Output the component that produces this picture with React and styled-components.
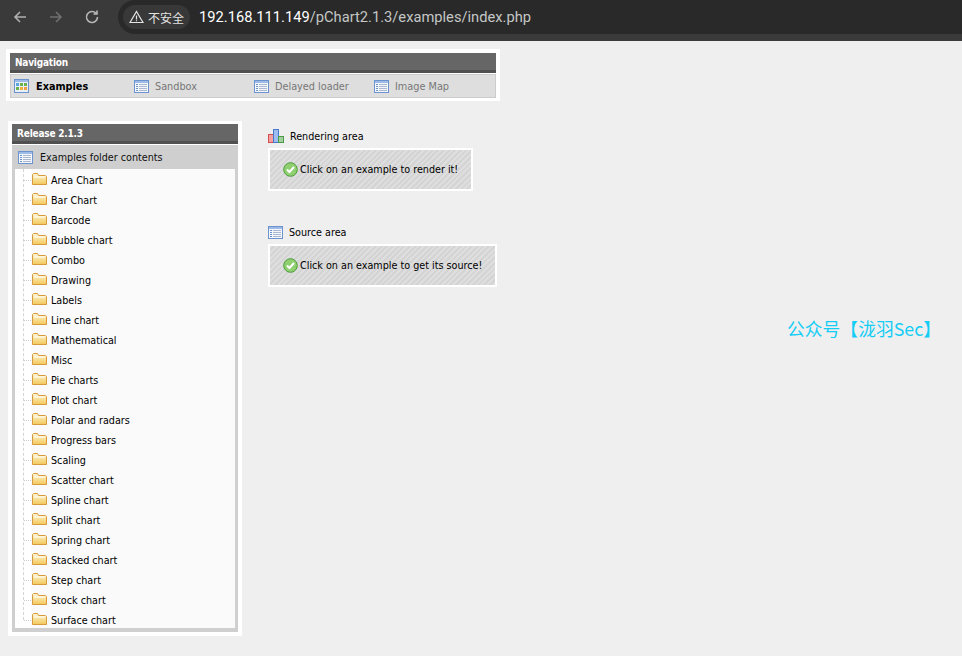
import React from "react";
import styled, { createGlobalStyle } from "styled-components";

const Global = createGlobalStyle`
  html, body { margin: 0; padding: 0; background: #efefef; }
  body { font-family: "DejaVu Sans", Verdana, sans-serif; font-stretch: condensed; overflow: hidden; }
`;
const Page = styled.div`width: 962px; height: 656px; display: flex; flex-direction: column; position: relative; overflow: hidden;`;
const Chrome = styled.div`height: 41px; background: #3a3a3a; display: flex; align-items: flex-start; box-sizing: border-box; flex: none;`;
const NavIcon = styled.div`width: 36px; height: 34px; display: flex; align-items: center; justify-content: center; flex: none;`;
const Omni = styled.div`margin-left: 8px; height: 34px; flex: 1; background: #292929; border-radius: 17px 0 0 17px; display: flex; align-items: center; padding-left: 5px; box-sizing: border-box;`;
const Chip = styled.div`height: 24px; width: 67px; background: #383838; border-radius: 12px; display: flex; align-items: center; justify-content: center; gap: 4px; color: #e3e3e3; font: 12px "Noto Sans CJK SC", sans-serif;`;
const Url = styled.div`margin-left: 9px; font: 14.7px "Roboto", sans-serif; color: #c4c7c5; b { font-weight: 400; color: #fff; }`;
const Body = styled.div`flex: 1; padding: 8px 0 0 6px; display: flex; flex-direction: column;`;
const NavBox = styled.div`width: 494px; box-sizing: border-box; height: 52px; background: #fff; padding: 4px;`;
const Head = styled.div`height: 20px; box-sizing: border-box; background: #666; border-bottom: 3px solid #505050; color: #fff; font-weight: 700; font-size: 10px; letter-spacing: -.2px; line-height: 19px; padding-left: 5px;`;
const Tabs = styled.div`margin-top: 1px; height: 24px; box-sizing: border-box; background: #dedede; border: 1px solid #ccc; display: flex; align-items: center; padding-left: 3px;`;
const Tab = styled.div`width: 120px; flex: none; display: flex; align-items: center; gap: ${p => p.$on ? 7 : 6}px; font-size: 10.8px; font-weight: ${p => p.$on ? 700 : 400}; color: ${p => p.$on ? "#000" : "#777"};`;
const Columns = styled.div`display: flex; margin-top: 20px; align-items: flex-start;`;
const Side = styled.div`margin-left: 2px; width: 234px; height: 515px; box-sizing: border-box; background: #fff; padding: 3px 4px 4px; flex: none;`;
const SideInner = styled.div`height: 508px; background: #cfcfcf; display: flex; flex-direction: column; box-sizing: border-box; padding-bottom: 4px; overflow: hidden;`;
const FolderHead = styled.div`border-top: 1px solid #fff; height: 25px; box-sizing: border-box; flex: none; display: flex; align-items: center; gap: 7px; padding-left: 6px; font-size: 10.7px; color: #111;`;
const Tree = styled.div`margin: 0 3px; flex: 1; background: linear-gradient(90deg, #fff 0 16px, #fafafa 16px); position: relative; padding: 1px 0 0 16px; overflow: hidden;`;
const Row = styled.div`height: 20px; display: flex; align-items: center; gap: 4px; padding-left: 1px; font-size: 10.7px; color: #000; position: relative;
  &::before { content: ""; position: absolute; left: -7px; top: 10px; width: 7px; border-top: 1px dotted #ccc; }`;
const Dots = styled.div`position: absolute; left: 8px; top: 0; height: 451px; border-left: 1px dashed #d4d4d4;`;
const Main = styled.div`margin-left: 26px; margin-top: 4px; width: 400px;`;
const Section = styled.div`margin-bottom: 30px;`;
const Title = styled.div`height: 22px; display: flex; align-items: center; gap: 6px; font-size: 10.7px; color: #000; margin-bottom: 1px;`;
const Message = styled.div`width: ${p => p.$w}px; height: 43px; box-sizing: border-box; border: 2px solid #fff; display: flex; align-items: center; gap: 2px; padding-left: 13px; font-size: 10.7px; color: #000;
  background: repeating-linear-gradient(135deg, #dedede 0 2px, #d4d4d4 2px 4px);`;
const Mark = styled.div`position: absolute; left: 787px; top: 315px; font: 17.8px "Noto Sans CJK SC", sans-serif; color: #14cdf5; white-space: nowrap;`;

const Grid = () => (
  <svg width="15" height="14" viewBox="0 0 15 14"><rect x=".5" y=".5" width="14" height="13" fill="#e8f0fb" stroke="#6d93cf"/><rect x="1" y="1" width="13" height="2" fill="#9dbbe6"/><rect x="2" y="4" width="3" height="3" fill="#5aa5e0"/><rect x="6" y="4" width="3" height="3" fill="#6ab04c"/><rect x="10" y="4" width="3" height="3" fill="#6ab04c"/><rect x="2" y="8" width="3" height="3" fill="#6ab04c"/><rect x="6" y="8" width="3" height="3" fill="#f0b040"/><rect x="10" y="8" width="3" height="3" fill="#f0a040"/></svg>
);
const List = () => (
  <svg width="15" height="13" viewBox="0 0 15 13" style={{ flex: "none" }}><rect x=".5" y=".5" width="14" height="12" fill="#f4f7fc" stroke="#6d93cf"/><rect x="1" y="1" width="13" height="2" fill="#9dbbe6"/>{[4, 6, 8, 10].map(y => <g key={y}><rect x="2" y={y} width="2" height="1" fill="#6d93cf"/><rect x="5" y={y} width="8" height="1" fill="#a9b8cf"/></g>)}</svg>
);
const Bars = () => (
  <svg width="16" height="14" viewBox="0 0 16 14"><rect x=".5" y="5.5" width="5" height="8" fill="#f8a0a0" stroke="#d05050"/><rect x="5.5" y=".5" width="5" height="13" fill="#9dbdf0" stroke="#4a78c8"/><rect x="10.5" y="7.5" width="5" height="6" fill="#a0d0a0" stroke="#4a9a4a"/></svg>
);
const Folder = () => (
  <svg width="15" height="12" viewBox="0 0 15 12" style={{ flex: "none", marginTop: -2 }}><defs><linearGradient id="fg" x1="0" y1="0" x2="0" y2="1"><stop offset="0" stopColor="#fdf6d8"/><stop offset="1" stopColor="#f3c85a"/></linearGradient></defs><path d="M.5 11.5V1.5l1-1h4l1 2h7l1 1v8z" fill="url(#fg)" stroke="#d99a3c"/><path d="M2 4h11" stroke="#fff"/></svg>
);
const Check = () => (
  <svg width="15" height="15" viewBox="0 0 15 15" style={{ flex: "none" }}><circle cx="7.5" cy="7.5" r="6.8" fill="#8fcf70" stroke="#4c9a3c"/><path d="M4 7.5l2.5 2.5L11 5" fill="none" stroke="#fff" strokeWidth="2"/></svg>
);

const folders = ["Area Chart","Bar Chart","Barcode","Bubble chart","Combo","Drawing","Labels","Line chart","Mathematical","Misc","Pie charts","Plot chart","Polar and radars","Progress bars","Scaling","Scatter chart","Spline chart","Split chart","Spring chart","Stacked chart","Step chart","Stock chart","Surface chart"];

export default function App() {
  return (
    <Page>
      <Global />
      <Chrome>
        <NavIcon style={{ marginLeft: 2 }}><svg width="16" height="16" viewBox="0 0 16 16" fill="none" stroke="#b0b0b0" strokeWidth="1.6"><path d="M14 8H3M8 3L3 8l5 5"/></svg></NavIcon>
        <NavIcon><svg width="16" height="16" viewBox="0 0 16 16" fill="none" stroke="#6f6f6f" strokeWidth="1.6"><path d="M2 8h11M8 3l5 5-5 5"/></svg></NavIcon>
        <NavIcon><svg width="16" height="16" viewBox="0 0 16 16" fill="none" stroke="#b8b8b8" strokeWidth="1.6"><path d="M13.5 8A5.5 5.5 0 1 1 12 4.2M13 1.5V5H9.5"/></svg></NavIcon>
        <Omni>
          <Chip><svg width="15" height="14" viewBox="0 0 15 14" fill="none" stroke="#e3e3e3" strokeWidth="1.2"><path d="M7.5 1.5L14 12.5H1zM7.5 5.5v4M7.5 10.3v1"/></svg>不安全</Chip>
          <Url><b>192.168.111.149</b>/pChart2.1.3/examples/index.php</Url>
        </Omni>
      </Chrome>
      <Body>
        <NavBox>
          <Head>Navigation</Head>
          <Tabs>
            <Tab $on><Grid />Examples</Tab>
            <Tab><List />Sandbox</Tab>
            <Tab><List />Delayed loader</Tab>
            <Tab><List />Image Map</Tab>
          </Tabs>
        </NavBox>
        <Columns>
          <Side>
            <SideInner>
              <Head>Release 2.1.3</Head>
              <FolderHead><List />Examples folder contents</FolderHead>
              <Tree>
                <Dots />
                {folders.map(f => <Row key={f}><Folder />{f}</Row>)}
              </Tree>
            </SideInner>
          </Side>
          <Main>
            <Section>
              <Title><Bars />Rendering area</Title>
              <Message $w={205}><Check />Click on an example to render it!</Message>
            </Section>
            <Section>
              <Title><List />Source area</Title>
              <Message $w={229}><Check />Click on an example to get its source!</Message>
            </Section>
          </Main>
        </Columns>
      </Body>
      <Mark>公众号【泷羽Sec】</Mark>
    </Page>
  );
}
